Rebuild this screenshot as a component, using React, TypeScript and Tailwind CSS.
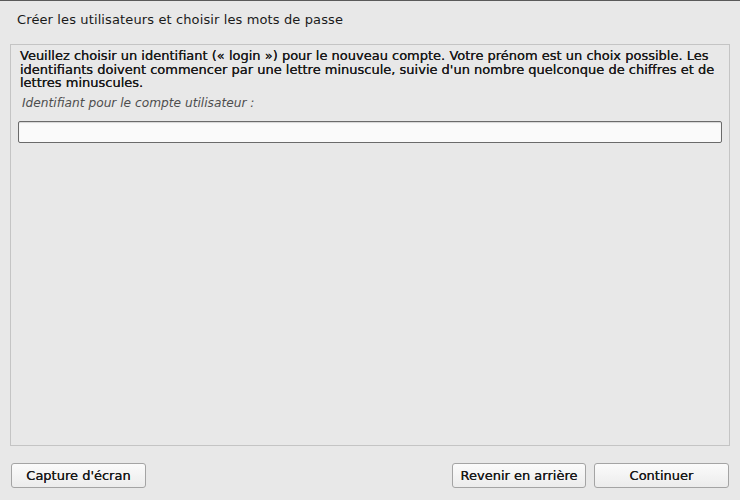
export default function App() {
  return (
    <div
      className="w-[740px] h-[500px] bg-[#e8e8e8] border-t border-[#5a5a5a] flex flex-col text-[#1a1a1a]"
      style={{ fontFamily: '"DejaVu Sans", sans-serif' }}
    >
      <div className="h-[43px] pl-[17px] pt-[11px] text-[13px] leading-[16px] tracking-[0.12px]">
        Créer les utilisateurs et choisir les mots de passe
      </div>

      <div className="mx-[10px] h-[402px] border border-[#c4c4c4] pl-[9px] pr-[6px] pt-[4px] flex flex-col">
        <p className="text-[13px] leading-[13.5px] [text-shadow:0_0_0.4px_#1a1a1a]">
          Veuillez choisir un identifiant (« login ») pour le nouveau compte. Votre prénom est un choix possible. Les
          identifiants doivent commencer par une lettre minuscule, suivie d'un nombre quelconque de chiffres et de
          lettres minuscules.
        </p>
        <div className="mt-[6px] ml-[2px] text-[12.2px] italic text-[#4e4e4e] leading-[15px]">
          Identifiant pour le compte utilisateur :
        </div>
        <input
          type="text"
          className="mt-[10px] -ml-[2px] mr-[1px] h-[22px] border border-[#6a6a6a] rounded-[2px] bg-[#fafafa] shadow-[inset_0_1px_1px_rgba(0,0,0,0.15)] outline-none"
        />
      </div>

      <div className="flex items-center px-[11px] pt-[17px]">
        <button className="w-[135px] h-[25px] border border-[#a4a4a4] rounded-[3px] bg-gradient-to-b from-[#fbfbfb] to-[#ececec] text-[13px] [text-shadow:0_0_0.3px_#1a1a1a]">
          Capture d'écran
        </button>
        <div className="flex-1" />
        <button className="w-[134px] h-[25px] border border-[#a4a4a4] rounded-[3px] bg-gradient-to-b from-[#fbfbfb] to-[#ececec] text-[13px] [text-shadow:0_0_0.3px_#1a1a1a]">
          Revenir en arrière
        </button>
        <button className="ml-[8px] w-[135px] h-[25px] border border-[#a4a4a4] rounded-[3px] bg-gradient-to-b from-[#fbfbfb] to-[#ececec] text-[13px] [text-shadow:0_0_0.3px_#1a1a1a]">
          Continuer
        </button>
      </div>
    </div>
  );
}
